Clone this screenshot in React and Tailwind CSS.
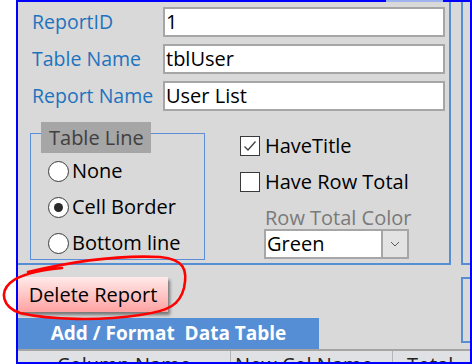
import React from "react";

const font = { fontFamily: '"Open Sans", "Noto Sans", sans-serif' };

function Field({ label, value }) {
  return (
    <div className="flex items-center h-[30px]">
      <div className="w-[145px] pl-[14px] text-[19.5px] leading-[30px] text-[#1e73be] whitespace-nowrap">{label}</div>
      <div className="w-[282px] h-[30px] border-2 border-[#a6a6a6] bg-white pl-[1px] text-[20px] leading-[26px] text-black">
        {value}
      </div>
    </div>
  );
}

function Radio({ label, checked }) {
  return (
    <div className="flex items-center h-[36px]">
      <div className="w-[21px] h-[21px] rounded-full border border-[#3a3a3a] bg-white flex items-center justify-center shrink-0">
        {checked && <div className="w-[9px] h-[9px] rounded-full bg-[#2a2a2a]" />}
      </div>
      <div className="ml-[3px] text-[20px] leading-[26px] text-black">{label}</div>
    </div>
  );
}

function Check({ label, checked }) {
  return (
    <div className="flex items-center h-[36px]">
      <div className="w-[20px] h-[20px] border-[1.5px] border-[#3a3a3a] bg-white flex items-center justify-center shrink-0">
        {checked && (
          <svg width="14" height="12" viewBox="0 0 14 12">
            <path d="M1.5 6.5 L5 10 L12.5 1.5" fill="none" stroke="#404040" strokeWidth="1.3" />
          </svg>
        )}
      </div>
      <div className="ml-[5px] text-[20px] leading-[26px] text-black">{label}</div>
    </div>
  );
}

export default function App() {
  return (
    <div className="relative w-[472px] h-[364px] bg-white flex" style={font}>
      <div className="w-[16px] shrink-0" />
      <div className="w-[456px] h-[364px] border-2 border-[#0000ff] bg-[#d9d9d9] flex flex-col overflow-hidden">
        {/* top row */}
        <div className="flex h-[263px] shrink-0">
          <div className="w-[433px] h-[263px] border-r-2 border-b-2 border-[#558ed5] pt-[5px]">
            <div className="flex flex-col gap-[7px]">
              <Field label="ReportID" value="1" />
              <Field label="Table Name" value="tblUser" />
              <Field label="Report Name" value="User List" />
            </div>
            <div className="flex items-start pl-[12px]">
              <div className="relative w-[175px] h-[127px] mt-[22px] border border-[#5b8fd9] pl-[17px] pt-[19px]">
                <div className="absolute -top-[12px] left-[10px] w-[110px] h-[31px] bg-[#a6a6a6] pl-[8px] text-[20px] leading-[31px] text-[#404040]">
                  Table Line
                </div>
                <Radio label="None" />
                <Radio label="Cell Border" checked />
                <Radio label="Bottom line" />
              </div>
              <div className="ml-[35px] mt-[17px] flex flex-col">
                <Check label="HaveTitle" checked />
                <Check label="Have Row Total" />
                <div className="ml-[24px] mt-[6px] h-[23px] pl-[1px] text-[20px] leading-[23px] text-[#7a7a7a]">
                  Row Total Color
                </div>
                <div className="ml-[24px] w-[145px] h-[30px] border-2 border-[#a6a6a6] bg-white flex">
                  <div className="flex-1 pl-[1px] text-[20px] leading-[26px] text-black">Green</div>
                  <div className="w-[26px] h-full border-l-2 border-[#a6a6a6] bg-[#e3e3e3] flex items-center justify-center">
                    <svg width="10" height="6" viewBox="0 0 10 6">
                      <path d="M1 1 L5 5 L9 1" fill="none" stroke="#5a5a5a" strokeWidth="1" />
                    </svg>
                  </div>
                </div>
              </div>
            </div>
          </div>
          <div className="w-[10px]" />
          <div className="flex-1 border-l-2 border-b-2 border-[#558ed5]" />
        </div>
        {/* middle row */}
        <div className="flex h-[84px] shrink-0">
          <div className="flex flex-col pt-[12px]">
            <div className="w-[150px] h-[35px] bg-gradient-to-b from-[#ffeaea] via-[#ffc6c6] to-[#ffa2a2] shadow-[2px_3px_3px_rgba(0,0,0,0.45)] flex items-center justify-center text-[20px] text-black">
              Delete Report
            </div>
            <div className="mt-[6px] w-[301px] h-[31px] bg-[#558ed5] flex items-center justify-center text-[19px] font-bold text-white whitespace-pre">
              Add / Format  Data Table
            </div>
          </div>
          <div className="flex-1" />
          <div className="w-[9px] h-[66px] mt-[12px] border-l-2 border-y-2 border-[#558ed5]" />
        </div>
        {/* table header */}
        <div className="flex flex-1 border-t-2 border-[#a5a5a5] bg-[#dfe1e5] overflow-hidden">
          <div className="w-[213px] border-r border-[#b5b5b5] text-center pt-[1px] text-[20px] leading-[26px] text-[#222]">
            Column Name
          </div>
          <div className="w-[162px] border-r border-[#b5b5b5] pl-[4px] pt-[1px] text-[20px] leading-[26px] text-[#222]">
            New Col Name
          </div>
          <div className="flex-1 pl-[14px] pt-[1px] text-[20px] leading-[26px] text-[#222]">Total</div>
        </div>
      </div>
      {/* faint bar at top */}
      <div className="absolute top-0 left-[386px] w-[57px] h-[2px] bg-[#9fb3ee]" />
      {/* hand-drawn red ellipse */}
      <svg className="absolute left-0 top-0 pointer-events-none" width="472" height="364" viewBox="0 0 472 364">
        <path
          d="M28 272 C 70 262, 120 255, 160 257 C 184 259, 188 270, 184 288 C 180 304, 170 311, 140 315 C 100 321, 50 320, 20 313 C 2 307, 0 292, 10 283 C 20 274, 40 270, 62 268"
          fill="none"
          stroke="#ff0000"
          strokeWidth="2.6"
          strokeLinecap="round"
        />
      </svg>
    </div>
  );
}
